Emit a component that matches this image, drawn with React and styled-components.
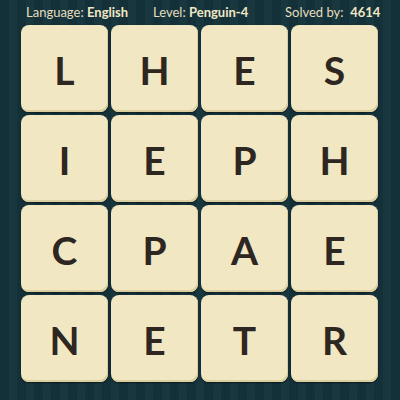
import React from 'react';
import styled, { createGlobalStyle } from 'styled-components';

const letters = [
    ['L', 'H', 'E', 'S'],
    ['I', 'E', 'P', 'H'],
    ['C', 'P', 'A', 'E'],
    ['N', 'E', 'T', 'R']
];

const GlobalStyle = createGlobalStyle`
    html, body {
        margin: 0;
        padding: 0;
    }
    body {
        font-family: Lato, "Open Sans", sans-serif;
    }
`;

export default function App() {
    return (
        <Page>
            <GlobalStyle />
            <Header>
                <Info>Language: <b>English</b></Info>
                <Info>Level: <b>Penguin-4</b></Info>
                <Info>Solved by:&nbsp; <b>4614</b></Info>
            </Header>
            <Board>
                {letters.flat().map((letter, i) => (
                    <Tile key={i}>{letter}</Tile>
                ))}
            </Board>
        </Page>
    );
}

const Page = styled.div`
    width: 400px;
    height: 400px;
    box-sizing: border-box;
    padding: 0 22px 0 21px;
    background-color: #14313a;
    background-image: repeating-linear-gradient(
        90deg,
        #14313a 0px,
        #14313a 9px,
        #18373f 9px,
        #18373f 17px
    );
    overflow: hidden;
`;

const Header = styled.header`
    height: 25px;
    display: grid;
    grid-template-columns: 127px 132px auto;
    align-items: center;
    padding: 0 0 2px 5px;
    box-sizing: border-box;
`;

const Info = styled.span`
    color: #e6ddbd;
    font-size: 13px;
    white-space: nowrap;

    b {
        font-weight: 700;
        color: #f1e8c6;
    }
`;

const Board = styled.div`
    display: grid;
    grid-template-columns: repeat(4, 87px);
    grid-auto-rows: 87px;
    gap: 3px;
`;

const Tile = styled.div`
    display: flex;
    align-items: center;
    justify-content: center;
    background: #f1e7c2;
    border-radius: 8px;
    box-shadow: inset -1px -2px 0 #dccf9f, 0 1px 2px rgba(0, 0, 0, 0.5);
    color: #2d2621;
    font-family: Lato, "Open Sans", sans-serif;
    font-weight: 700;
    font-size: 39px;
    padding-top: 2px;
    box-sizing: border-box;
`;
